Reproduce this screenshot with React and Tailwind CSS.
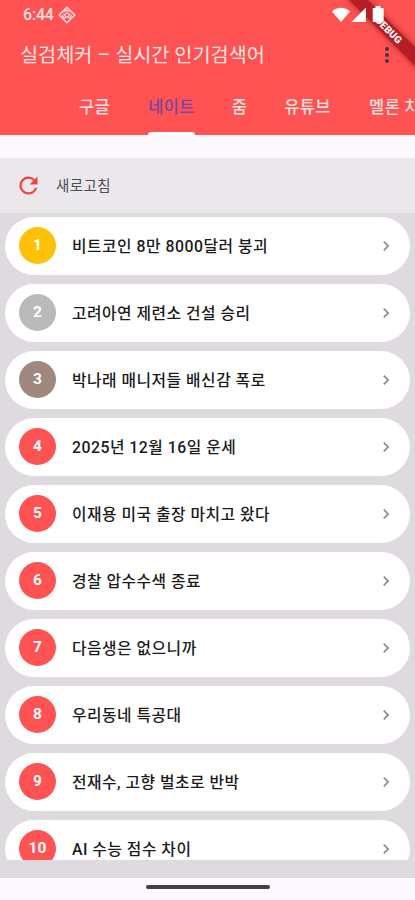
import { MdRefresh, MdChevronRight, MdMoreVert } from "react-icons/md";

const tabs = [
  { name: "구글", left: "ml-[79px]", width: "w-[31px]" },
  { name: "네이트", left: "ml-[38px]", width: "w-[47px]", active: true },
  { name: "줌", left: "ml-[37px]", width: "w-[15px]" },
  { name: "유튜브", left: "ml-[37px]", width: "w-[47px]" },
  { name: "멜론 차트", left: "ml-[38px]", width: "w-[67px]" },
];

const keywords = [
  "비트코인 8만 8000달러 붕괴",
  "고려아연 제련소 건설 승리",
  "박나래 매니저들 배신감 폭로",
  "2025년 12월 16일 운세",
  "이재용 미국 출장 마치고 왔다",
  "경찰 압수수색 종료",
  "다음생은 없으니까",
  "우리동네 특공대",
  "전재수, 고향 벌초로 반박",
  "AI 수능 점수 차이",
];

const rankColors = ["bg-[#ffc107]", "bg-[#b9bbba]", "bg-[#a1887f]"];

function StatusBar() {
  return (
    <div className="flex h-7 items-center pl-[23px] pt-px text-[#ffe3e3]">
      <span className="w-[31px] text-[16px] font-medium leading-none tracking-[-0.2px]">6:44</span>
      <svg className="ml-[4px] h-[18px] w-[18px]" viewBox="0 0 18 18" fill="none" stroke="currentColor" strokeWidth="1.4">
        <path d="M9 1.2 16.8 9 9 16.8 1.2 9Z" />
        <path d="M9 4v2.6M5.3 7.6l2 1.6M12.8 7.6l-2 1.6M6.8 12.6l1-2.4M11.2 12.6l-1-2.4" strokeWidth="1.1" />
        <circle cx="9" cy="9" r="2" strokeWidth="1.1" />
        <path d="M5.6 5.8 9 3.8l3.4 2M4.2 9.2l2.4 3M13.8 9.2l-2.4 3" strokeWidth="1.1" />
      </svg>
      {/* stays above the debug ribbon */}
      <svg className="relative z-10 ml-[256px] h-[17px] w-[52px] text-white" viewBox="0 0 52 17" fill="currentColor">
        <path d="M0 5.4C5.2.7 12.8.7 18 5.4L9 16Z" />
        <path d="M34 1.5V16H19.5Z" />
        <path d="M43.5 0h5v2h2.2c.6 0 1 .4 1 1v12c0 .6-.4 1-1 1h-9c-.6 0-1-.4-1-1V3c0-.6.4-1 1-1h1.8Z" />
      </svg>
    </div>
  );
}

function DebugBanner() {
  return (
    <div className="pointer-events-none absolute right-0 top-0 h-[80px] w-[80px] overflow-hidden">
      <div className="absolute left-[2px] top-[22px] flex h-[13px] w-[100px] rotate-45 items-center justify-center bg-[#a9151f]/85 pl-[5px] text-[10px] font-black leading-none tracking-[0.2px] text-white shadow-[0_0_6px_rgba(90,0,0,0.55)]">
        DEBUG
      </div>
    </div>
  );
}

function KeywordRow({ rank, text }) {
  const color = rankColors[rank - 1] || "bg-[#ff5252]";
  return (
    <div className="flex h-[58px] shrink-0 items-center rounded-full bg-white pb-px pl-[14px] pr-[14px]">
      <div className={`flex h-[37px] w-[37px] items-center justify-center rounded-full pt-px text-[15.5px] font-bold text-white ${color}`}>
        {rank}
      </div>
      <span className="ml-[16px] flex-1 whitespace-nowrap pt-[2px] text-[15.8px] font-medium tracking-[0.5px] text-[#1c1b1c]">{text}</span>
      <MdChevronRight className="h-5 w-5 text-[#8b8b8d]" />
    </div>
  );
}

export default function App() {
  return (
    <div className="relative flex h-[900px] w-[415px] flex-col overflow-hidden bg-[#fdf7ff] font-[Roboto,'Noto_Sans_CJK_KR',sans-serif]">
      <header className="h-[135px] shrink-0 bg-[#ff5252]">
        <StatusBar />
        <div className="flex h-[54px] items-center justify-between pl-[20px] pr-[16px]">
          <h1 className="whitespace-nowrap pt-[2px] text-[19.7px] leading-none text-[#ffe6e6]">실검체커 – 실시간 인기검색어</h1>
          <MdMoreVert className="h-6 w-6 text-[#49343a]" />
        </div>
        <nav className="flex h-[53px] overflow-hidden text-[16.5px] font-medium tracking-[0.4px]">
          {tabs.map((tab) => (
            <div
              key={tab.name}
              className={`relative flex shrink-0 justify-center whitespace-nowrap pt-[14px] leading-6 ${tab.left} ${tab.width} ${tab.active ? "text-[#7546a2]" : "text-[#ffe0e0]"}`}
            >
              {tab.name}
              {tab.active && <div className="absolute bottom-0 h-[3px] w-[47px] rounded-t-[3px] bg-white" />}
            </div>
          ))}
        </nav>
      </header>

      <button className="mt-[23px] flex h-[55px] shrink-0 items-center bg-[#ebe8ec] pl-[15px] text-left">
        <MdRefresh className="h-[27px] w-[27px] text-[#f4433e]" />
        <span className="ml-[14px] pt-[3px] text-[14.5px] tracking-[0.4px] text-[#504d52]">새로고침</span>
      </button>

      <main className="h-[665px] shrink-0 bg-[#dedae0] px-[5px] pt-[4px]">
        <div className="flex h-[643px] flex-col gap-[9px] overflow-hidden">
          {keywords.map((keyword, i) => (
            <KeywordRow key={keyword} rank={i + 1} text={keyword} />
          ))}
        </div>
      </main>

      <div className="flex flex-1 justify-center pt-[7px]">
        <div className="h-[4px] w-[124px] rounded-full bg-[#454047]" />
      </div>
      <DebugBanner />
    </div>
  );
}
